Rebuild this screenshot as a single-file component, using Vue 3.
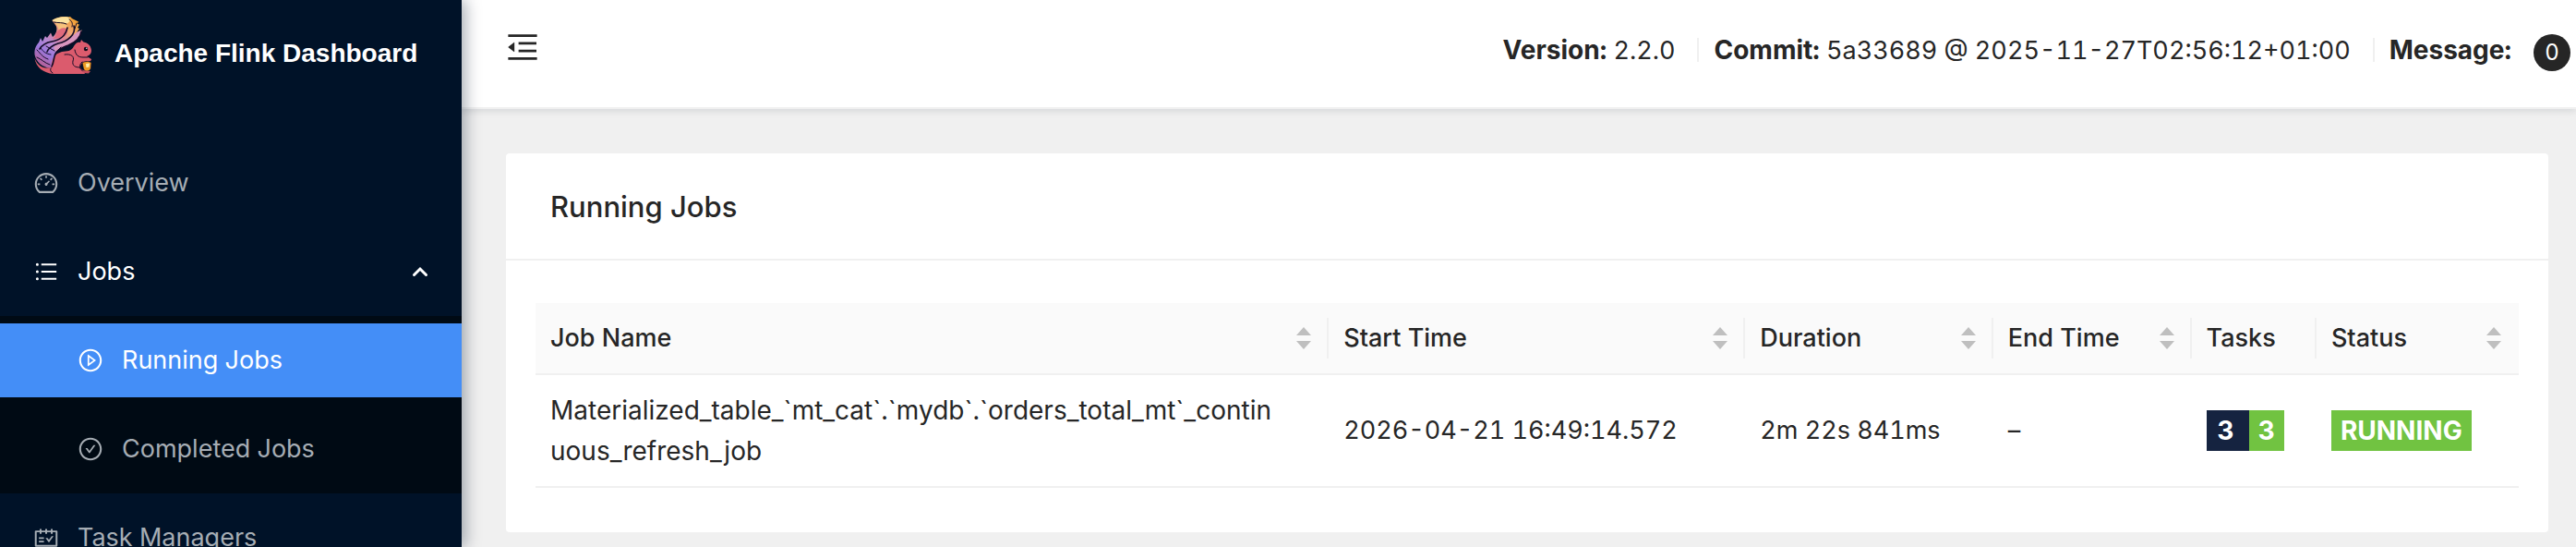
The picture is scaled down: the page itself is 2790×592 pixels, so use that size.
<template>
  <div class="layout">
    <aside class="sider">
      <a class="logo" href="#/">
        <svg class="logo-mark" viewBox="0 0 64 64" aria-hidden="true">
          <defs>
            <linearGradient id="tail" gradientUnits="userSpaceOnUse" x1="46" y1="4" x2="10" y2="52">
              <stop offset="0" stop-color="#f2a02f" />
              <stop offset="0.25" stop-color="#f0a873" />
              <stop offset="0.42" stop-color="#dc8298" />
              <stop offset="0.6" stop-color="#b98ad2" />
              <stop offset="0.8" stop-color="#9a78dd" />
              <stop offset="1" stop-color="#b2639f" />
            </linearGradient>
          </defs>
          <path fill="url(#tail)" d="M20.5 5C24 2 32 0 38 1.500L40 1l2 2 7 3.500-1.500 2.500 2.500.5-2 3.500 2 1-3 4 5.500-2.500C51 23 48 27 42 30c-8 4-15 6-18 13-2 5-2 11-5 14C10 56 3 50 1.500 42 1 35 4 31 6 29l2-5 2 4 3-6 2 2 4-5.500 2 4.500c4-3 6-9 3-13-1.500-2.500-3-3-3.500-5z" />
          <path fill="#fbe3a0" d="M20.500 5C25 1.500 33 .5 38 1.500c3 2 2 6-2 7-5-2-11 0-15.500-3.500z" />
          <path fill="#f6c27c" d="M24 8c5-1 10 0 12 2 3 3-4 5-8 9 0-4-1-8-4-11z" />
          <path fill="#e06a7c" d="M25 18c4-5 9-6 12-3 1 4-2 8-7 9l-9 1c3-2 4-4 4-7z" />
          <path fill="#d795bd" d="M24 30c8-1 18-7 23-12l5.500-2.500C51 23 48 27 42 30c-7 3-13 5-17 9-3-2-3-6-1-9z" />
          <path fill="#db5b6d" d="M1.500 46C5 55 12 58 20 56c-1-10 4-15 11-17 6-1 10 0 13-6 2-4 5-5 7-4l1-3 2.500 2.500C60 29 63 34 63 38c0 3-2 5-5 6l5 3c0 3-5 3-9 4-4 2-4 6 0 8l2 4H22C11 62 3 56 1.500 46z" />
          <g fill="none" stroke="#120b26" stroke-linecap="round">
            <path stroke-width="1.600" d="M37 13c-2 9-9 14-17 15-6 1-10 3-13 8M44 11c3 9-7 17-17 19-6 2-10 4-12 9M52 17c-1 8-7 12-14 15-8 3-14 6-15 12-1 4-1 7-3 11" />
            <path stroke-width="1" d="M22 7c5 1 10 0 14 2M39 4c3 2 4 4 3 8M4 37c4 4 6 8 12 10M8 35c3 4 5 6 11 7M4 45c5 2 8 6 14 8M14 33l9 5M47 8l-2 6M30 34l-5 5" />
            <path stroke-width="1" d="M34 42c7-1 11 2 9 7-1 5 2 7 8 7M45 37c1 6 4 8 9 8h5M53 50c-4 4-3 8 1 10M21 62c-2-1-3-3-2-5" />
          </g>
          <path fill="#ee9c25" stroke="#120b26" stroke-width="0.8" d="M53 51c3-2 8-2 10 0l-.5 6c-2 4-6 4-8 1z" />
          <path fill="#fff0ad" d="M57 52l4-.5-.5 4-3 .5z" />
          <path fill="#c54d5e" d="M53 59l9 1-2 2.500-5-.5z" />
          <circle cx="57" cy="36" r="2.200" fill="#120b1c" />
          <circle cx="57.800" cy="35.200" r="0.700" fill="#fff" />
        </svg>
        <h1>Apache Flink Dashboard</h1>
      </a>
      <nav class="menu">
        <a class="menu-item" href="#/overview">
          <svg class="icon" viewBox="0 0 1024 1024" aria-hidden="true"><path :d="icons.dashboard" /></svg>
          <span>Overview</span>
        </a>
        <button class="menu-item open" type="button" aria-expanded="true">
          <svg class="icon" viewBox="0 0 1024 1024" aria-hidden="true"><path :d="icons.bars" /></svg>
          <span>Jobs</span>
          <svg class="arrow" viewBox="0 0 18 12" aria-hidden="true"><path d="M2.500 9.500L9 3l6.500 6.500" /></svg>
        </button>
        <div class="submenu">
          <a class="menu-item selected" href="#/job/running" aria-current="page">
            <svg class="icon" viewBox="0 0 1024 1024" aria-hidden="true">
              <path :d="icons.circle" />
              <path :d="icons.play" />
            </svg>
            <span>Running Jobs</span>
          </a>
          <a class="menu-item" href="#/job/completed">
            <svg class="icon" viewBox="0 0 1024 1024" aria-hidden="true">
              <path :d="icons.circle" />
              <path :d="icons.check" />
            </svg>
            <span>Completed Jobs</span>
          </a>
        </div>
        <a class="menu-item" href="#/task-manager">
          <svg class="icon" viewBox="0 0 1024 1024" aria-hidden="true"><path :d="icons.schedule" /></svg>
          <span>Task Managers</span>
        </a>
      </nav>
    </aside>

    <div class="main">
      <header class="header">
        <button class="trigger" type="button" aria-label="Toggle menu">
          <svg viewBox="0 0 1024 1024" aria-hidden="true"><path :d="icons.menuFold" /></svg>
        </button>
        <div class="build">
          <span><strong>Version:</strong> {{ config.version }}</span>
          <i class="divider"></i>
          <span><strong>Commit:</strong> {{ config.commit }}</span>
          <i class="divider"></i>
          <strong>Message:</strong>
          <span class="count">{{ config.messages }}</span>
        </div>
      </header>

      <main class="content">
        <section class="card">
          <h2 class="card-title">Running Jobs</h2>
          <div class="card-body">
            <table>
              <colgroup>
                <col v-for="col in columns" :key="col.key" :class="`col-${col.key}`" />
              </colgroup>
              <thead>
                <tr>
                  <th v-for="col in columns" :key="col.key" scope="col">
                    <button v-if="col.sort" class="sorter" type="button" @click="sortBy(col.key)">
                      {{ col.title }}
                      <svg viewBox="0 0 16 24" aria-hidden="true"><path d="M8 0l8 9H0zM0 15h16l-8 9z" /></svg>
                    </button>
                    <template v-else>{{ col.title }}</template>
                  </th>
                </tr>
              </thead>
              <tbody>
                <tr v-for="job in sortedJobs" :key="job.name">
                  <td class="job-name">{{ job.name }}</td>
                  <td>{{ job.start }}</td>
                  <td>{{ job.duration }}</td>
                  <td>{{ job.end }}</td>
                  <td>
                    <div class="tasks">
                      <span class="badge total">{{ job.total }}</span>
                      <span class="badge">{{ job.running }}</span>
                    </div>
                  </td>
                  <td><span class="badge">{{ job.status }}</span></td>
                </tr>
              </tbody>
            </table>
          </div>
        </section>
      </main>
    </div>
  </div>
</template>

<script setup>
import { computed, ref } from 'vue'

const config = {
  version: '2.2.0',
  commit: '5a33689 @ 2025-11-27T02:56:12+01:00',
  messages: 0
}

const columns = [
  { key: 'name', title: 'Job Name', sort: true },
  { key: 'start', title: 'Start Time', sort: true },
  { key: 'duration', title: 'Duration', sort: true },
  { key: 'end', title: 'End Time', sort: true },
  { key: 'tasks', title: 'Tasks', sort: false },
  { key: 'status', title: 'Status', sort: true }
]

const jobs = [
  {
    // zero-width space: preferred break in the long name
    name: 'Materialized_table_`mt_cat`.`mydb`.`orders_total_mt`_contin\u200buous_refresh_job',
    start: '2026-04-21 16:49:14.572',
    duration: '2m 22s 841ms',
    end: '–',
    total: 3,
    running: 3,
    status: 'RUNNING'
  }
]

const sortKey = ref('')

const sortedJobs = computed(() => {
  if (!sortKey.value) return jobs
  return [...jobs].sort((a, b) => a[sortKey.value].localeCompare(b[sortKey.value]))
})

function sortBy(key) {
  sortKey.value = sortKey.value === key ? '' : key
}

const icons = {
  dashboard: 'M924.8 385.6a446.7 446.7 0 00-96-142.4 446.7 446.7 0 00-142.4-96C631.1 123.8 572.5 112 512 112s-119.1 11.8-174.4 35.2a446.7 446.7 0 00-142.4 96 446.7 446.7 0 00-96 142.4C75.8 440.9 64 499.5 64 560c0 132.7 58.3 257.7 159.9 343.1l1.7 1.4c5.8 4.8 13.1 7.5 20.6 7.5h531.7c7.5 0 14.8-2.7 20.6-7.5l1.7-1.4C901.7 817.7 960 692.7 960 560c0-60.5-11.9-119.1-35.2-174.4zM761.4 836H262.6A371.12 371.12 0 01140 560c0-99.4 38.7-192.8 109-263 70.3-70.3 163.7-109 263-109 99.4 0 192.8 38.7 263 109 70.3 70.3 109 163.7 109 263 0 105.6-44.5 205.5-122.6 276zM623.5 421.5a8.03 8.03 0 00-11.3 0L527.7 506c-18.7-5-39.4-.2-54.1 14.5a55.95 55.95 0 000 79.2 55.95 55.95 0 0079.2 0 55.87 55.87 0 0014.5-54.1l84.5-84.5c3.1-3.1 3.1-8.2 0-11.3l-28.3-28.3zM490 320h44c4.4 0 8-3.6 8-8v-80c0-4.4-3.6-8-8-8h-44c-4.4 0-8 3.6-8 8v80c0 4.4 3.6 8 8 8zm260 218v44c0 4.4 3.6 8 8 8h80c4.4 0 8-3.6 8-8v-44c0-4.4-3.6-8-8-8h-80c-4.4 0-8 3.6-8 8zm12.7-197.2l-31.1-31.1a8.03 8.03 0 00-11.3 0l-56.6 56.6a8.03 8.03 0 000 11.3l31.1 31.1c3.1 3.1 8.2 3.1 11.3 0l56.6-56.6c3.1-3.1 3.1-8.2 0-11.3zm-458.6-31.1a8.03 8.03 0 00-11.3 0l-31.1 31.1a8.03 8.03 0 000 11.3l56.6 56.6c3.1 3.1 8.2 3.1 11.3 0l31.1-31.1c3.1-3.1 3.1-8.2 0-11.3l-56.6-56.6zM262 530h-80c-4.4 0-8 3.6-8 8v44c0 4.4 3.6 8 8 8h80c4.4 0 8-3.6 8-8v-44c0-4.4-3.6-8-8-8z',
  bars: 'M912 192H328c-4.4 0-8 3.6-8 8v56c0 4.4 3.6 8 8 8h584c4.4 0 8-3.6 8-8v-56c0-4.4-3.6-8-8-8zm0 284H328c-4.4 0-8 3.6-8 8v56c0 4.4 3.6 8 8 8h584c4.4 0 8-3.6 8-8v-56c0-4.4-3.6-8-8-8zm0 284H328c-4.4 0-8 3.6-8 8v56c0 4.4 3.6 8 8 8h584c4.4 0 8-3.6 8-8v-56c0-4.4-3.6-8-8-8zM104 228a56 56 0 10112 0 56 56 0 10-112 0zm0 284a56 56 0 10112 0 56 56 0 10-112 0zm0 284a56 56 0 10112 0 56 56 0 10-112 0z',
  circle: 'M512 64C264.6 64 64 264.6 64 512s200.6 448 448 448 448-200.6 448-448S759.4 64 512 64zm0 820c-205.4 0-372-166.6-372-372s166.6-372 372-372 372 166.6 372 372-166.6 372-372 372z',
  play: 'M719.4 499.1l-296.1-215A15.9 15.9 0 00398 297v430c0 13.1 14.8 20.5 25.3 12.9l296.1-215a15.9 15.9 0 000-25.8zm-257.6 134V390.9L628.5 512 461.8 633.1z',
  check: 'M699 353h-46.9c-10.2 0-19.9 4.9-25.9 13.3L469 584.3l-71.2-98.8c-6-8.3-15.6-13.3-25.9-13.3H325c-6.5 0-10.3 7.4-6.5 12.7l124.6 172.8a31.8 31.8 0 0051.7 0l210.6-292c3.9-5.3.1-12.7-6.4-12.7z',
  schedule: 'M928 224H768v-56c0-4.4-3.6-8-8-8h-56c-4.4 0-8 3.6-8 8v56H548v-56c0-4.4-3.6-8-8-8h-56c-4.4 0-8 3.6-8 8v56H328v-56c0-4.4-3.6-8-8-8h-56c-4.4 0-8 3.6-8 8v56H96c-17.7 0-32 14.3-32 32v576c0 17.7 14.3 32 32 32h832c17.7 0 32-14.3 32-32V256c0-17.7-14.3-32-32-32zm-40 568H136V296h120v56c0 4.4 3.6 8 8 8h56c4.4 0 8-3.6 8-8v-56h148v56c0 4.4 3.6 8 8 8h56c4.4 0 8-3.6 8-8v-56h148v56c0 4.4 3.6 8 8 8h56c4.4 0 8-3.6 8-8v-56h120v496zM416 496H232c-4.4 0-8 3.6-8 8v48c0 4.4 3.6 8 8 8h184c4.4 0 8-3.6 8-8v-48c0-4.4-3.6-8-8-8zm0 136H232c-4.4 0-8 3.6-8 8v48c0 4.4 3.6 8 8 8h184c4.4 0 8-3.6 8-8v-48c0-4.4-3.6-8-8-8zm308.2-177.4L620.6 598.3l-52.8-73.1c-3-4.2-7.8-6.6-12.9-6.6H500c-6.5 0-10.3 7.4-6.5 12.7l114.1 158.2a15.9 15.9 0 0025.8 0l165-228.7c3.8-5.3 0-12.7-6.5-12.7H737c-5-.1-9.8 2.4-12.8 6.5z',
  menuFold: 'M408 442h480c4.4 0 8-3.6 8-8v-56c0-4.4-3.6-8-8-8H408c-4.4 0-8 3.6-8 8v56c0 4.4 3.6 8 8 8zm-8 204c0 4.4 3.6 8 8 8h480c4.4 0 8-3.6 8-8v-56c0-4.4-3.6-8-8-8H408c-4.4 0-8 3.6-8 8v56zm504-486H120c-4.4 0-8 3.6-8 8v56c0 4.4 3.6 8 8 8h784c4.4 0 8-3.6 8-8v-56c0-4.4-3.6-8-8-8zm0 632H120c-4.4 0-8 3.6-8 8v56c0 4.4 3.6 8 8 8h784c4.4 0 8-3.6 8-8v-56c0-4.4-3.6-8-8-8zM115.4 518.9L271.7 642c5.8 4.6 14.4.5 14.4-6.9V388.9c0-7.4-8.5-11.5-14.4-6.9L115.4 505.1a8.74 8.74 0 000 13.8z'
}
</script>

<style>
body {
  margin: 0;
  overflow: hidden;
}
</style>

<style scoped>
.layout {
  display: flex;
  height: 100vh;
  overflow: hidden;
  background: #f0f0f0;
  color: #262626;
  font-family: Inter, "Liberation Sans", sans-serif;
  font-size: 27px;
  font-variant-numeric: tabular-nums;
  line-height: 44px;
}

button {
  border: 0;
  padding: 0;
  background: none;
  color: inherit;
  font: inherit;
  text-align: left;
  cursor: pointer;
}

a {
  color: inherit;
  text-decoration: none;
}

.sider {
  z-index: 1;
  flex: 0 0 500px;
  background: #001228;
  box-shadow: 4px 0 16px rgba(0, 21, 41, 0.35);
}

.logo {
  display: flex;
  align-items: center;
  gap: 24px;
  height: 116px;
  padding-left: 36px;
}

.logo-mark {
  width: 64px;
  height: 64px;
  margin-bottom: 18px;
}

.logo h1 {
  margin: 0;
  color: #fff;
  font-family: "Liberation Sans", sans-serif;
  font-size: 28px;
  font-weight: 700;
  white-space: nowrap;
}

.menu {
  display: flex;
  flex-direction: column;
  padding-top: 34px;
}

.menu-item {
  display: flex;
  align-items: center;
  gap: 20px;
  height: 80px;
  margin: 8px 0;
  padding: 0 36px;
  color: #a6adb4;
  white-space: nowrap;
}

.menu-item.open,
.menu-item.selected {
  color: #fff;
}

.menu-item.selected {
  background: #448ef7;
}

.submenu {
  display: flex;
  flex-direction: column;
  background: #000a14;
}

.submenu .menu-item {
  padding-left: 84px;
}

.icon {
  width: 28px;
  height: 28px;
  fill: currentColor;
}

.arrow {
  width: 18px;
  margin-left: auto;
  fill: none;
  stroke: currentColor;
  stroke-width: 3;
  stroke-linecap: round;
}

.main {
  flex: 1;
  min-width: 0;
}

.header {
  display: flex;
  align-items: center;
  justify-content: space-between;
  height: 116px;
  padding: 0 6px 0 46px;
  background: #fff;
  border-bottom: 2px solid #f0f0f0;
  box-shadow: 0 2px 8px rgba(0, 21, 41, 0.12);
}

.trigger {
  display: flex;
  margin-bottom: 14px;
}

.trigger svg {
  width: 40px;
  height: 40px;
  fill: currentColor;
}

.build {
  display: flex;
  align-items: center;
  margin-bottom: 8px;
  white-space: nowrap;
}

.build strong {
  font-size: 28px;
  font-weight: 700;
}

.divider {
  width: 2px;
  height: 26px;
  margin: 0 16px 0 24px;
  background: #f0f0f0;
}

.count {
  width: 40px;
  height: 40px;
  margin: 6px 0 0 24px;
  border-radius: 50%;
  background: #262626;
  color: #fff;
  font-size: 24px;
  line-height: 40px;
  text-align: center;
}

.content {
  padding: 48px 30px 16px 48px;
}

.card {
  border-radius: 4px;
  background: #fff;
}

.card-title {
  margin: 0;
  padding: 36px 48px 34px;
  border-bottom: 2px solid #f0f0f0;
  font-size: 31px;
  font-weight: 500;
}

.card-body {
  padding: 46px 32px 48px;
}

table {
  width: 100%;
  border-collapse: separate;
  border-spacing: 0;
  table-layout: fixed;
}

.col-name {
  width: 40%;
}

.col-start {
  width: 21%;
}

.col-duration {
  width: 12.5%;
}

.col-end {
  width: 10%;
}

.col-tasks {
  width: 6.3%;
}

th {
  position: relative;
  padding: 16px;
  background: #fafafa;
  border-bottom: 2px solid #f0f0f0;
  font-weight: 500;
  text-align: left;
}

th:not(:last-child)::before {
  position: absolute;
  top: 16px;
  right: 0;
  width: 2px;
  height: 44px;
  background: #f0f0f0;
  content: "";
}

.sorter {
  display: flex;
  align-items: center;
  justify-content: space-between;
  width: 100%;
}

.sorter svg {
  width: 16px;
  height: 24px;
  margin-right: 3px;
  fill: #bfbfbf;
}

td {
  padding: 16px;
  border-bottom: 2px solid #f0f0f0;
  overflow-wrap: break-word;
}

.job-name {
  font-size: 28px;
}

.tasks {
  display: flex;
}

.badge {
  display: inline-block;
  padding: 0 10px;
  background: #71c341;
  color: #fff;
  font-size: 28px;
  font-weight: 700;
}

.badge.total {
  padding: 0 16px 0 12px;
  background: #152340;
}
</style>
